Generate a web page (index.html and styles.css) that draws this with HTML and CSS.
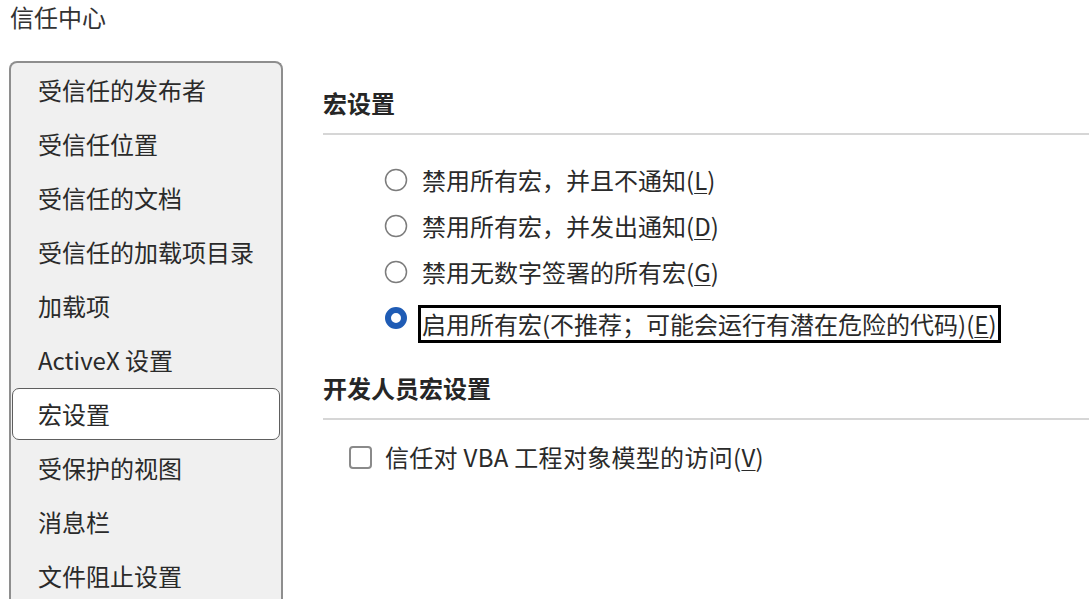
FILE: index.html
```html
<!DOCTYPE html>
<html lang="zh-CN">
<head>
<meta charset="utf-8">
<title>信任中心</title>
<link rel="stylesheet" href="styles.css">
</head>
<body>
<div class="page">
  <div class="title">信任中心</div>
  <div class="body">
    <nav class="sidebar">
      <div class="nav-item">受信任的发布者</div>
      <div class="nav-item">受信任位置</div>
      <div class="nav-item">受信任的文档</div>
      <div class="nav-item">受信任的加载项目录</div>
      <div class="nav-item">加载项</div>
      <div class="nav-item">ActiveX 设置</div>
      <div class="nav-item selected">宏设置</div>
      <div class="nav-item">受保护的视图</div>
      <div class="nav-item">消息栏</div>
      <div class="nav-item">文件阻止设置</div>
    </nav>
    <main class="main">
      <div class="section-head">宏设置</div>
      <div class="options">
        <div class="opt">
          <svg class="radio" width="24" height="24" viewBox="0 0 24 24"><circle cx="12" cy="12" r="10.5" fill="#fff" stroke="#7c7c7c" stroke-width="1.5"/></svg>
          <span class="label">禁用所有宏，并且不通知(<u>L</u>)</span>
        </div>
        <div class="opt">
          <svg class="radio" width="24" height="24" viewBox="0 0 24 24"><circle cx="12" cy="12" r="10.5" fill="#fff" stroke="#7c7c7c" stroke-width="1.5"/></svg>
          <span class="label">禁用所有宏，并发出通知(<u>D</u>)</span>
        </div>
        <div class="opt">
          <svg class="radio" width="24" height="24" viewBox="0 0 24 24"><circle cx="12" cy="12" r="10.5" fill="#fff" stroke="#7c7c7c" stroke-width="1.5"/></svg>
          <span class="label">禁用无数字签署的所有宏(<u>G</u>)</span>
        </div>
        <div class="opt">
          <svg class="radio" width="24" height="24" viewBox="0 0 24 24"><circle cx="12" cy="12" r="8" fill="#fff" stroke="#1f5cb5" stroke-width="6"/></svg>
          <span class="label focus">启用所有宏(不推荐；可能会运行有潜在危险的代码)(<u>E</u>)</span>
        </div>
      </div>
      <div class="section-head second">开发人员宏设置</div>
      <div class="checks">
        <div class="opt">
          <span class="checkbox"></span>
          <span class="check-label">信任对 VBA 工程对象模型的访问(<u>V</u>)</span>
        </div>
      </div>
    </main>
  </div>
</div>
</body>
</html>
```
FILE: styles.css
```css
* { box-sizing: border-box; }
html, body { margin: 0; padding: 0; background: #fff; }
body {
  font-family: "Noto Sans CJK SC", "Noto Sans", sans-serif;
  color: #2a2a2a;
  overflow: hidden;
  height: 599px;
}
.page { display: flex; flex-direction: column; height: 599px; overflow: hidden; }
.title {
  flex: none;
  height: 61px;
  padding-left: 10px;
  font-size: 24px;
  line-height: 34px;
  color: #333;
}
.body { display: flex; flex: none; }
.sidebar {
  margin-left: 9px;
  width: 274px;
  height: 560px;
  border: 2px solid #8e8e8e;
  border-bottom: none;
  border-radius: 8px 8px 0 0;
  background: #f0f0f0;
  flex: none;
  display: flex;
  flex-direction: column;
  gap: 2px;
  padding: 1px;
}
.nav-item {
  flex: none;
  height: 52px;
  padding-left: 25px;
  border: 1px solid transparent;
  border-radius: 7px;
  font-size: 24px;
  line-height: 49px;
  color: #2a2a2a;
  white-space: nowrap;
}
.nav-item.selected {
  background: #fff;
  border-color: #5e5e5e;
}
.main {
  flex: 1;
  padding-left: 40px;
  padding-top: 26px;
}
.section-head {
  font-size: 24px;
  font-weight: bold;
  line-height: 32px;
  padding-bottom: 14px;
  border-bottom: 2px solid #d6d6d6;
  color: #262626;
}
.section-head.second { margin-top: 31px; }
.options { margin-top: 22px; padding-left: 61px; }
.opt {
  display: flex;
  align-items: center;
  height: 46px;
  font-size: 24px;
  white-space: nowrap;
}
.radio { flex: none; margin-right: 10px; }
.label {
  border: 3px solid transparent;
  padding: 0 1px;
  line-height: 32px;
}
.label.focus {
  border-color: #000;
  margin-top: 11px;
}
u { text-underline-offset: 3px; text-decoration-thickness: 1px; }
.checks { margin-top: 14px; padding-left: 26px; }
.checkbox {
  flex: none;
  width: 23px;
  height: 23px;
  border: 2px solid #8a8a8a;
  border-radius: 4px;
  background: #fff;
  margin-right: 13px;
}
.check-label { line-height: 32px; letter-spacing: 0.3px; }
```
